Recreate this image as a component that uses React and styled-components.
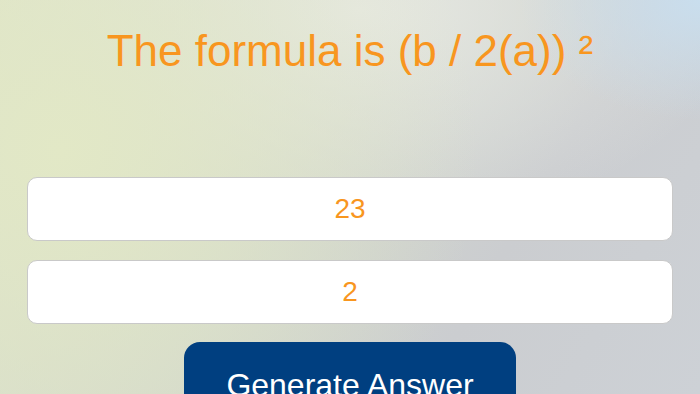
import styled, { createGlobalStyle } from "styled-components"

const GlobalStyle = createGlobalStyle`
  html, body {
    margin: 0;
    padding: 0;
    height: 100%;
    overflow: hidden;
  }
  body {
    font-family: "Liberation Sans", Arial, Helvetica, sans-serif;
    background:
      radial-gradient(ellipse 180px 120px at 700px 0px, #c9deee 0%, rgba(201,222,238,0) 100%),
      radial-gradient(ellipse 420px 420px at 60px 150px, #e2e8c6 0%, rgba(226,232,198,0) 100%),
      radial-gradient(ellipse 380px 220px at 360px 10px, #e6e8e2 0%, rgba(230,232,226,0) 100%),
      linear-gradient(120deg, #dde3c9 0%, #d3d8cd 40%, #cbcdd0 70%, #cdd1d6 100%);
  }
`

const Screen = styled.div`
  width: 700px;
  height: 394px;
  box-sizing: border-box;
  padding: 26px 27px 0;
  display: flex;
  flex-direction: column;
  align-items: stretch;
  overflow: hidden;
`

const Title = styled.h1`
  flex-shrink: 0;
  margin: 0 0 100px;
  font-size: 44px;
  font-weight: 400;
  line-height: 1.15;
  color: #f8961f;
  text-align: center;
  white-space: nowrap;
`

const Field = styled.div`
  flex-shrink: 0;
  height: 64px;
  box-sizing: border-box;
  margin-bottom: ${props => props.last ? '18px' : '19px'};
  background: #ffffff;
  border: 1px solid #c9c9c9;
  border-radius: 10px;
  display: flex;
  align-items: center;
  justify-content: center;
  font-size: 28px;
  color: #f8961f;
`

const ButtonRow = styled.div`
  flex-shrink: 0;
  display: flex;
  justify-content: center;
`

const GenerateButton = styled.button`
  width: 332px;
  height: 90px;
  padding: 25px 0 0;
  border: none;
  border-radius: 16px;
  background: #003f80;
  color: #ffffff;
  font-family: "Liberation Sans", Arial, Helvetica, sans-serif;
  font-size: 32px;
  line-height: 1.15;
  display: flex;
  justify-content: center;
  align-items: flex-start;
`

export default function App() {
  return (
    <>
      <GlobalStyle />
      <Screen>
        <Title>The formula is (b / 2(a)) ²</Title>
        <Field>23</Field>
        <Field last>2</Field>
        <ButtonRow>
          <GenerateButton>Generate Answer</GenerateButton>
        </ButtonRow>
      </Screen>
    </>
  )
}
